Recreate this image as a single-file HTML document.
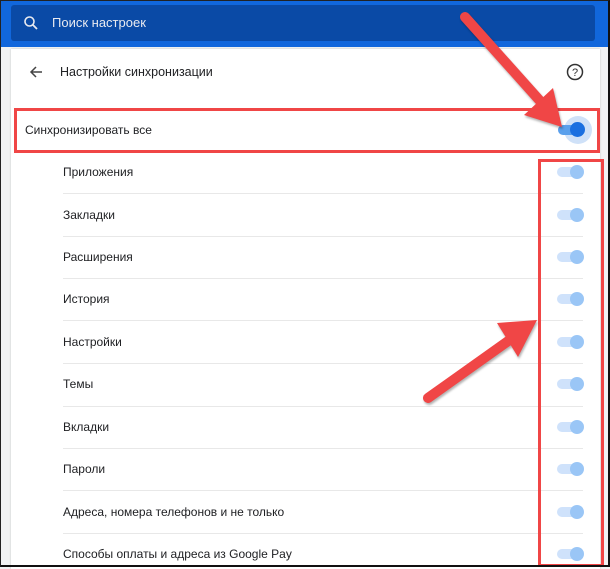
<!DOCTYPE html>
<html><head><meta charset="utf-8"><style>
*{margin:0;padding:0;box-sizing:border-box}
body{width:610px;height:567px;overflow:hidden;background:#f1f3f4;font-family:"Liberation Sans",Arial,sans-serif;position:relative;color:#202124}
.frame{position:absolute;left:0;top:0;width:610px;height:567px;border:1px solid #222;border-bottom:2px solid #111;border-right:2px solid #111;z-index:10;pointer-events:none}
.top{position:absolute;left:0;top:0;width:610px;height:47px;background:#1167dc}
.search{position:absolute;left:11px;top:5px;width:584px;height:36px;background:#0a4aa6;border-radius:3px}
.search span{position:absolute;left:41px;top:10px;color:#e8eaf0;font-size:13px}
.card{position:absolute;left:11px;top:49px;width:589px;height:520px;background:#fff;box-shadow:0 0 2px rgba(0,0,0,.2)}
.t{position:absolute;font-size:12px;color:#202124}
.div{position:absolute;left:63px;width:520px;height:1px;background:#e8e8e8}
.tg{position:absolute;left:557px;width:22px;height:10px;border-radius:5px;background:#cfe2fb}
.tg::after{content:"";position:absolute;right:-5px;top:-2px;width:14px;height:14px;border-radius:50%;background:#9ac6f6}
.rb{position:absolute;border:3px solid #f04646}
</style></head><body>
<div class="top"><div class="search">
<svg style="position:absolute;left:12px;top:10px" width="16" height="16" viewBox="0 0 16 16"><circle cx="6.5" cy="6.5" r="4.5" fill="none" stroke="#e8eaf0" stroke-width="1.6"/><path d="M10 10l4 4" stroke="#e8eaf0" stroke-width="1.8"/></svg>
<span>Поиск настроек</span></div></div>
<div class="card"></div>
<svg style="position:absolute;left:29px;top:65px" width="14" height="14" viewBox="0 0 14 14"><path d="M13 7H2M7 2L2 7l5 5" fill="none" stroke="#444" stroke-width="1.5"/></svg>
<div class="t" style="left:60px;top:65px;font-size:12.5px">Настройки синхронизации</div>
<svg style="position:absolute;left:565px;top:62px" width="20" height="20" viewBox="0 0 20 20"><circle cx="10" cy="10" r="7.5" fill="none" stroke="#333" stroke-width="1.5"/><text x="10" y="14" font-size="11" text-anchor="middle" fill="#333" font-family="Liberation Sans">?</text></svg>
<div class="t" style="left:25px;top:123px">Синхронизировать все</div>
<div style="position:absolute;left:564px;top:116px;width:28px;height:28px;border-radius:50%;background:#cfe1f8"></div>
<div style="position:absolute;left:558px;top:125px;width:20px;height:10px;border-radius:5px;background:#5aa0ec"></div>
<div style="position:absolute;left:570px;top:122px;width:15px;height:15px;border-radius:50%;background:#1a6fe0"></div>

<div class="t" style="left:63px;top:165px">Приложения</div><div class="tg" style="top:167px"></div><div class="div" style="top:193px"></div>
<div class="t" style="left:63px;top:208px">Закладки</div><div class="tg" style="top:210px"></div><div class="div" style="top:236px"></div>
<div class="t" style="left:63px;top:250px">Расширения</div><div class="tg" style="top:252px"></div><div class="div" style="top:278px"></div>
<div class="t" style="left:63px;top:292px">История</div><div class="tg" style="top:294px"></div><div class="div" style="top:320px"></div>
<div class="t" style="left:63px;top:335px">Настройки</div><div class="tg" style="top:337px"></div><div class="div" style="top:363px"></div>
<div class="t" style="left:63px;top:377px">Темы</div><div class="tg" style="top:379px"></div><div class="div" style="top:406px"></div>
<div class="t" style="left:63px;top:420px">Вкладки</div><div class="tg" style="top:422px"></div><div class="div" style="top:448px"></div>
<div class="t" style="left:63px;top:462px">Пароли</div><div class="tg" style="top:464px"></div><div class="div" style="top:490px"></div>
<div class="t" style="left:63px;top:505px">Адреса, номера телефонов и не только</div><div class="tg" style="top:507px"></div><div class="div" style="top:533px"></div>
<div class="t" style="left:63px;top:547px">Способы оплаты и адреса из Google Pay</div><div class="tg" style="top:549px"></div>

<div class="rb" style="left:14px;top:108px;width:586px;height:45px"></div>
<div class="rb" style="left:538px;top:159px;width:66px;height:408px"></div>

<svg style="position:absolute;left:0;top:0" width="610" height="567">
<g fill="#f04646" stroke="#f04646" style="filter:drop-shadow(1px 2px 1px rgba(0,0,0,.3))">
<line x1="465" y1="17" x2="541" y2="102" stroke-width="10" stroke-linecap="round"/>
<polygon points="562,127 524,115 553,88" stroke="none"/>
<line x1="428" y1="398" x2="511" y2="339" stroke-width="10" stroke-linecap="round"/>
<polygon points="537,320 497,323 518,357" stroke="none"/>
</g>
</svg>
<div class="frame"></div>
</body></html>
